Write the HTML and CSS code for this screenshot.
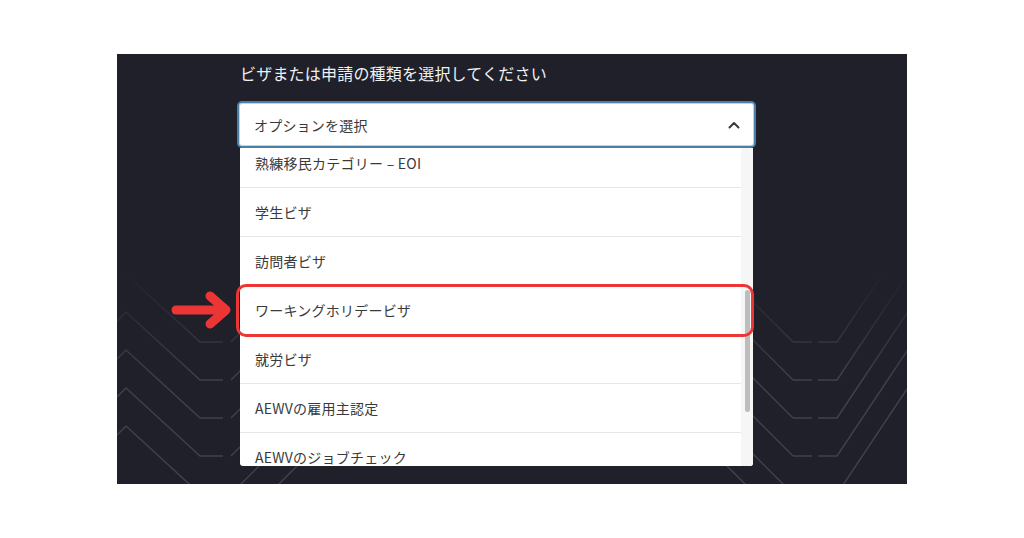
FILE: index.html
```html
<!DOCTYPE html>
<html lang="ja">
<head>
<meta charset="utf-8">
<title>ビザ選択</title>
<link rel="stylesheet" href="styles.css">
</head>
<body>
<div class="panel">
  <svg class="pattern" width="790" height="430" viewBox="0 0 790 430" aria-hidden="true">
    <g fill="none" stroke="#ffffff" stroke-opacity="0.15" stroke-width="1.5" stroke-linejoin="round">
      <polyline points="0,229 9,220 83,288 106,288"/>
      <polyline points="0,267 9,258 83,326 106,326"/>
      <polyline points="0,305 9,296 83,364 106,364"/>
      <polyline points="0,343 9,334 83,402 106,402"/>
      <polyline points="0,381 9,372 83,440 106,440"/>
      <polyline points="114,288 314,88"/>
      <polyline points="114,326 344,96"/>
      <polyline points="114,364 384,94"/>
      <polyline points="114,402 414,102"/>
      <polyline points="114,440 444,110"/>
      <polyline points="114,478 474,118"/>
      <polyline points="676,288 466,78"/>
      <polyline points="676,326 436,86"/>
      <polyline points="676,364 406,94"/>
      <polyline points="676,402 376,102"/>
      <polyline points="676,440 346,110"/>
      <polyline points="676,478 316,118"/>
      <polyline points="676,288 695,288"/>
      <polyline points="676,326 695,326"/>
      <polyline points="676,364 695,364"/>
      <polyline points="676,402 695,402"/>
      <polyline points="676,440 695,440"/>
      <polyline points="701,288 720,288 790,183"/>
      <polyline points="701,326 720,326 790,221"/>
      <polyline points="701,364 720,364 790,259"/>
      <polyline points="701,402 720,402 790,297"/>
      <polyline points="701,440 720,440 790,335"/>
    </g>
  </svg>

  <div class="content">
    <div class="label">ビザまたは申請の種類を選択してください</div>
    <div class="select">
      <span class="select-value">オプションを選択</span>
      <svg class="chevron" width="12" height="8" viewBox="0 0 12 8" aria-hidden="true">
        <path d="M1.5 6.5 L6 2 L10.5 6.5" fill="none" stroke="#3a3a3a" stroke-width="2" stroke-linecap="round" stroke-linejoin="round"/>
      </svg>
    </div>
    <div class="dropdown">
      <ul class="options">
        <li>熟練移民カテゴリー – EOI</li>
        <li>学生ビザ</li>
        <li>訪問者ビザ</li>
        <li>ワーキングホリデービザ</li>
        <li>就労ビザ</li>
        <li>AEWVの雇用主認定</li>
        <li>AEWVのジョブチェック</li>
      </ul>
      <div class="scrollbar"><div class="thumb"></div></div>
    </div>
  </div>

  <div class="highlight"></div>
  <svg class="arrow" width="64" height="40" viewBox="0 0 64 40" aria-hidden="true">
    <g fill="none" stroke="#ec3535" stroke-width="9" stroke-linecap="round" stroke-linejoin="round">
      <path d="M5 20 H52"/>
      <path d="M39 6 L55 20 L39 34"/>
    </g>
  </svg>
</div>
</body>
</html>
```

FILE: styles.css
```css
html, body {
  margin: 0;
  padding: 0;
  background: #ffffff;
}

body {
  font-family: "Noto Sans CJK JP", "Noto Sans", "Open Sans", sans-serif;
}

.panel {
  position: relative;
  margin: 54px 0 0 117px;
  width: 790px;
  height: 430px;
  background: #1f2029;
  overflow: hidden;
}

.pattern {
  position: absolute;
  left: 0;
  top: 0;
  -webkit-mask-image: linear-gradient(to bottom, transparent 50%, #000 76%);
  mask-image: linear-gradient(to bottom, transparent 50%, #000 76%);
}

.content {
  position: relative;
  z-index: 1;
  padding: 8px 0 0 120px;
  width: 519px;
}

.label {
  color: #eef0f2;
  font-size: 16px;
  line-height: 22px;
  padding-left: 3px;
  letter-spacing: 0.2px;
}

.select {
  margin-top: 17px;
  height: 47px;
  box-sizing: border-box;
  border: 2px solid #4a7fa6;
  border-radius: 5px;
  box-shadow: inset 0 0 0 1px #b9d6ea;
  background: #ffffff;
  display: flex;
  align-items: center;
  justify-content: space-between;
  padding: 0 14px 0 15px;
}

.select-value {
  font-size: 14px;
  color: #3a3a3a;
  letter-spacing: 0.2px;
}

.chevron {
  display: block;
}

.dropdown {
  margin-left: 3px;
  width: 513px;
  height: 318px;
  background: #ffffff;
  display: flex;
  overflow: hidden;
  border-radius: 0 0 3px 3px;
}

.options {
  list-style: none;
  margin: -9px 0 0 0;
  padding: 0;
  flex: 1;
}

.options li {
  height: 48px;
  border-bottom: 1px solid #e6e6e6;
  display: flex;
  align-items: center;
  padding-left: 15px;
  font-size: 14px;
  letter-spacing: 0.25px;
  color: #3a3a3a;
}

.scrollbar {
  width: 12px;
  background: #f6f6f6;
  flex: none;
}

.thumb {
  margin: 142px 0 0 4px;
  width: 5px;
  height: 122px;
  border-radius: 3px;
  background: #bdbdbd;
}

.highlight {
  position: absolute;
  z-index: 2;
  left: 119px;
  top: 230px;
  width: 518px;
  height: 53px;
  box-sizing: border-box;
  border: 3px solid #ec3535;
  border-radius: 10px;
}

.arrow {
  position: absolute;
  z-index: 2;
  left: 54px;
  top: 236px;
}
```
